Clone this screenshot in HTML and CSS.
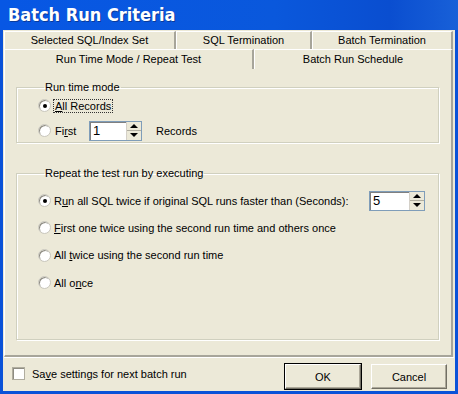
FILE: index.html
```html
<!DOCTYPE html>
<html lang="en">
<head>
  <meta charset="UTF-8">
  <title>Batch Run Criteria</title>
  <link rel="stylesheet" href="styles.css">
</head>
<body>
<div class="window">
  <div class="titlebar">Batch Run Criteria</div>
  <div class="client">
    <div class="tabs">
      <div class="tab-row back">
        <div class="tab t1">Selected SQL/Index Set</div>
        <div class="tab t2">SQL Termination</div>
        <div class="tab t3">Batch Termination</div>
      </div>
      <div class="tab-row front">
        <div class="tab t4 active">Run Time Mode / Repeat Test</div>
        <div class="tab t5">Batch Run Schedule</div>
      </div>
    </div>

    <div class="panel">
      <fieldset class="group group-mode">
        <legend>Run time mode</legend>
        <div class="opt">
          <span class="radio on"></span>
          <span class="focus"><u>A</u>ll Records</span>
        </div>
        <div class="opt">
          <span class="radio"></span>
          <span class="lbl-first">Fi<u>r</u>st</span>
          <span class="spin spin-first"><span class="val">1</span><span class="arrows"><i class="up"></i><i class="down"></i></span></span>
          <span class="records">Records</span>
        </div>
      </fieldset>

      <fieldset class="group group-repeat">
        <legend>Repeat the test run by executing</legend>
        <div class="opt">
          <span class="radio on"></span>
          <span class="long">R<u>u</u>n all SQL twice if original SQL runs faster than (Seconds):</span>
          <span class="spin spin-sec"><span class="val">5</span><span class="arrows"><i class="up"></i><i class="down"></i></span></span>
        </div>
        <div class="opt">
          <span class="radio"></span>
          <span><u>F</u>irst one twice using the second run time and others once</span>
        </div>
        <div class="opt">
          <span class="radio"></span>
          <span>All <u>t</u>wice using the second run time</span>
        </div>
        <div class="opt">
          <span class="radio"></span>
          <span>All o<u>n</u>ce</span>
        </div>
      </fieldset>
    </div>

    <div class="footer">
      <label class="check"><span class="box"></span>Sa<u>v</u>e settings for next batch run</label>
      <div class="buttons">
        <button class="btn default">OK</button>
        <button class="btn">Cancel</button>
      </div>
    </div>
  </div>
</div>
</body>
</html>
```

FILE: styles.css
```css
body { margin: 0; background: #fff; font-family: "Liberation Sans", Arial, sans-serif; font-size: 11px; color: #000; }
u { text-decoration: underline; }

.window { width: 458px; height: 394px; box-sizing: border-box; background: #0a52d8; padding: 0 3px 3px 3px; display: flex; flex-direction: column; }
.titlebar { height: 30px; line-height: 30px; margin: 0 -3px; padding-left: 8px; color: #fff; font-family: "DejaVu Sans Condensed", "DejaVu Sans", sans-serif; font-weight: bold; font-size: 18px;
  background: linear-gradient(90deg, #0757e4 0%, #0a58dc 60%, #0a4ed0 85%, #1860d8 100%); text-shadow: 1px 1px 0 #0a3a9a; }
.client { flex: 1; background: #ece9d8; display: flex; flex-direction: column; padding: 1px 1px 0 1px; }

.tabs { display: flex; flex-direction: column; }
.tab-row { display: flex; height: 18px; }
.tab { box-sizing: border-box; text-align: center; line-height: 17px; border-right: 2px solid #a7a59a; border-left: 1px solid #fff; border-top: 1px solid #fff; background: #ece9d8; white-space: nowrap; }
.t1 { width: 172px; }
.t2 { width: 136px; }
.t3 { width: 141px; }
.front { height: 20px; }
.t4 { width: 250px; }
.t5 { width: 199px; }
.front .tab { line-height: 18px; }

.panel { width: 449px; height: 288px; box-sizing: border-box; border-left: 1px solid #fff; border-right: 2px solid #a7a59a; border-bottom: 2px solid #a7a59a; padding: 12px 12px 0 11px; }

.group { margin: 0 0 24px 0; padding: 0 0 0 21px; border: 1px solid #d0d0bf; box-shadow: inset 1px 1px 0 #fff, 1px 1px 0 #fff; box-sizing: border-box; }
.group legend { padding: 0 1px; margin-left: 6px; line-height: 12px; }
.group-mode { height: 62px; }
.group-repeat { height: 173px; }

.opt { display: flex; align-items: center; height: 25px; white-space: nowrap; }
.group-repeat .opt { height: 27.3px; }
.group-repeat .opt:first-of-type { margin-top: 8px; }

.radio { width: 11px; height: 11px; border-radius: 50%; background: #fff; border: 1px solid #c8c6bc; box-shadow: inset 1px 1px 0 #8e8c82; margin-right: 3px; position: relative; flex: none; }
.radio.on::after { content: ""; position: absolute; left: 4px; top: 4px; width: 4px; height: 4px; border-radius: 50%; background: #000; }
.focus { outline: 1px dotted #333; padding: 0 1px; }

.lbl-first { width: 34px; padding-left: 1px; }
.spin { display: flex; background: #fff; border: 1px solid #7f9db9; box-sizing: border-box; height: 20px; box-shadow: inset 1px 1px 0 #808080; }
.spin .val { flex: 1; padding-left: 3px; line-height: 18px; font-size: 13px; }
.spin-first { width: 53px; }
.spin-sec { width: 56px; margin-left: auto; margin-right: 13px; }
.arrows { width: 15px; display: flex; flex-direction: column; background: #ece9d8; border-left: 1px solid #d4d0c8; box-sizing: border-box; }
.arrows i { flex: 1; position: relative; }
.arrows .up { border-bottom: 1px solid #b0ad9f; }
.arrows .up::after { content: ""; position: absolute; left: 3px; top: 2px; border-left: 4px solid transparent; border-right: 4px solid transparent; border-bottom: 4px solid #000; }
.arrows .down::after { content: ""; position: absolute; left: 3px; top: 2px; border-left: 4px solid transparent; border-right: 4px solid transparent; border-top: 4px solid #000; }
.records { margin-left: 14px; }

.footer { flex: 1; display: flex; align-items: flex-start; justify-content: space-between; padding: 6px 7px 0 8px; border-top: 1px solid #fff; }
.check { display: flex; align-items: center; margin-top: 3px; }
.check .box { width: 11px; height: 11px; background: #fff; border: 1px solid #b0ad9f; box-shadow: inset 1px 1px 0 #8e8c82; margin-right: 7px; }
.buttons { display: flex; gap: 10px; }
.btn { width: 76px; height: 25px; font-family: inherit; font-size: 11px; background: #ece9d8; border: 1px solid #fff; border-right-color: #716f64; border-bottom-color: #716f64; box-shadow: inset -1px -1px 0 #aca899; }
.btn.default { outline: 1px solid #000; }
```
